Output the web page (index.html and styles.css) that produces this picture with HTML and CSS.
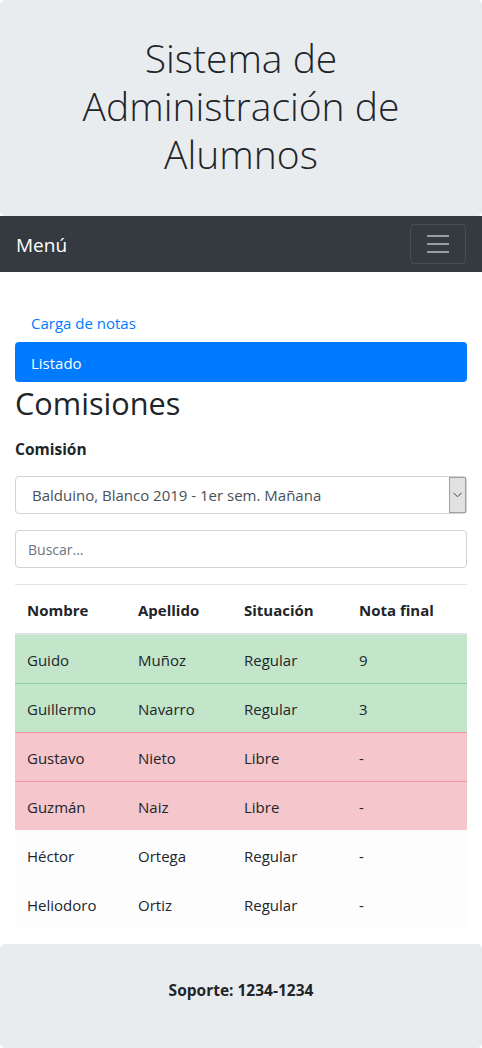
FILE: index.html
```html
<!DOCTYPE html>
<html lang="es">
<head>
<meta charset="utf-8">
<title>Sistema de Administración de Alumnos</title>
<link rel="stylesheet" href="styles.css">
</head>
<body>
<header class="jumbo">
  <h1 class="jumbo-title">Sistema de Administración de Alumnos</h1>
</header>
<nav class="navbar">
  <span class="brand">Menú</span>
  <button class="toggler" type="button" aria-label="Menú">
    <svg width="30" height="30" viewBox="0 0 30 30"><path d="M4 7h22M4 15h22M4 23h22" stroke="rgba(255,255,255,0.5)" stroke-width="2" stroke-linecap="butt"/></svg>
  </button>
</nav>
<main class="container">
  <ul class="pills">
    <li><a class="pill" href="#">Carga de notas</a></li>
    <li><a class="pill active" href="#">Listado</a></li>
  </ul>
  <h2 class="title">Comisiones</h2>
  <label class="label" for="comision">Comisión</label>
  <div class="select-wrap">
    <select id="comision" class="select">
      <option>Balduino, Blanco 2019 - 1er sem. Mañana</option>
    </select>
    <span class="select-btn"><svg width="9" height="6" viewBox="0 0 9 6"><path d="M0.5 0.8L4.5 4.8L8.5 0.8" fill="none" stroke="#444" stroke-width="1"/></svg></span>
  </div>
  <input class="input" type="text" placeholder="Buscar...">
  <hr class="sep">
  <table class="table">
    <colgroup>
      <col class="c1"><col class="c2"><col class="c3"><col class="c4">
    </colgroup>
    <thead>
      <tr><th>Nombre</th><th>Apellido</th><th>Situación</th><th>Nota final</th></tr>
    </thead>
    <tbody>
      <tr class="ok"><td>Guido</td><td>Muñoz</td><td>Regular</td><td>9</td></tr>
      <tr class="ok"><td>Guillermo</td><td>Navarro</td><td>Regular</td><td>3</td></tr>
      <tr class="bad"><td>Gustavo</td><td>Nieto</td><td>Libre</td><td>-</td></tr>
      <tr class="bad"><td>Guzmán</td><td>Naiz</td><td>Libre</td><td>-</td></tr>
      <tr class="light"><td>Héctor</td><td>Ortega</td><td>Regular</td><td>-</td></tr>
      <tr class="light"><td>Heliodoro</td><td>Ortiz</td><td>Regular</td><td>-</td></tr>
    </tbody>
  </table>
</main>
<footer class="footer">
  <p class="footer-text">Soporte: 1234-1234</p>
</footer>
</body>
</html>
```

FILE: styles.css
```css
* { box-sizing: border-box; }

html, body {
  margin: 0;
  padding: 0;
}

body {
  font-family: "Open Sans", "Noto Sans", "Liberation Sans", sans-serif;
  font-size: 16px;
  line-height: 1.5;
  color: #212529;
  background: #fff;
}

.jumbo {
  background: #e9ecef;
  border-radius: 4.8px;
  padding: 32px 16px;
  text-align: center;
}

.jumbo-title {
  margin: 0 0 8px;
  font-size: 39px;
  line-height: 48px;
  font-weight: 300;
  color: #212529;
  padding-top: 2px;
  height: 144px;
}

.navbar {
  background: #343a40;
  height: 56px;
  padding: 8px 16px;
  display: flex;
  align-items: center;
  justify-content: space-between;
}

.brand {
  color: #fff;
  font-size: 19px;
  line-height: 30px;
  padding-top: 1px;
}

.toggler {
  width: 56px;
  height: 40px;
  padding: 4px 12px;
  background: transparent;
  border: 1px solid rgba(255,255,255,0.1);
  border-radius: 4px;
  display: flex;
  align-items: center;
  justify-content: center;
}

.toggler svg { display: block; }

.container {
  padding: 30px 15px 0;
}

.pills {
  list-style: none;
  margin: 0;
  padding: 0;
  display: flex;
  flex-direction: column;
}

.pill {
  display: block;
  padding: 9px 16px 7px;
  font-size: 15px;
  line-height: 24px;
  color: #007bff;
  text-decoration: none;
  border-radius: 4px;
}

.pill.active {
  background: #007bff;
  color: #fff;
}

.title {
  margin: 0 0 8px;
  padding-top: 2px;
  height: 38.4px;
  font-size: 30.7px;
  line-height: 38.4px;
  font-weight: 400;
}

.label {
  display: block;
  margin: 19px 0 16px;
  font-size: 15.5px;
  line-height: 21px;
  font-weight: 700;
}

.select-wrap {
  position: relative;
  margin-bottom: 16px;
}

.select {
  display: block;
  width: 100%;
  height: 38px;
  padding: 6px 12px 6px 16px;
  font-family: inherit;
  font-size: 15px;
  line-height: 24px;
  color: #495057;
  background: #fff;
  border: 1px solid #ced4da;
  border-radius: 4px;
  appearance: none;
  -webkit-appearance: none;
}

.select-btn {
  position: absolute;
  top: 1px;
  right: 1px;
  width: 17px;
  height: 36px;
  background: #e1e1e1;
  border: 1px solid #a0a0a0;
  display: flex;
  align-items: center;
  justify-content: center;
}

.select-btn svg { display: block; }

.input {
  display: block;
  width: 100%;
  height: 38px;
  padding: 6px 12px;
  font-family: inherit;
  font-size: 14px;
  line-height: 24px;
  color: #495057;
  background: #fff;
  border: 1px solid #ced4da;
  border-radius: 4px;
  margin: 0;
}

.input::placeholder { color: #6c757d; }

.sep {
  margin: 16px 0 0;
  border: 0;
  border-top: 1px solid rgba(0,0,0,0.1);
  height: 0;
}

.table {
  width: 100%;
  border-collapse: collapse;
  table-layout: fixed;
}

.c1 { width: 111px; }
.c2 { width: 106px; }
.c3 { width: 115px; }
.c4 { width: 120px; }

.table th,
.table td {
  text-align: left;
  padding: 13px 12px 11px;
  line-height: 24px;
  vertical-align: top;
}

.table th {
  font-weight: 700;
  font-size: 15px;
  border-bottom: 2px solid #dee2e6;
}

.table td {
  font-size: 15px;
  border-top: 1px solid #dee2e6;
}

.table tbody tr:first-child td { border-top: 0; }

.ok { background: #c3e6cb; }
.ok td { border-top-color: #8fd19e !important; }
.bad { background: #f5c6cb; }
.bad td { border-top-color: #ed969e !important; }
.light { background: #fdfdfe; }
.light td { border-top-color: #fdfdfe !important; }

.footer {
  margin-top: 16px;
  background: #e9ecef;
  border-radius: 4.8px;
  padding: 34px 16px 30px;
  text-align: center;
}

.footer-text {
  margin: 0 0 16px;
  font-size: 15.5px;
  line-height: 24px;
  font-weight: 700;
}
```
